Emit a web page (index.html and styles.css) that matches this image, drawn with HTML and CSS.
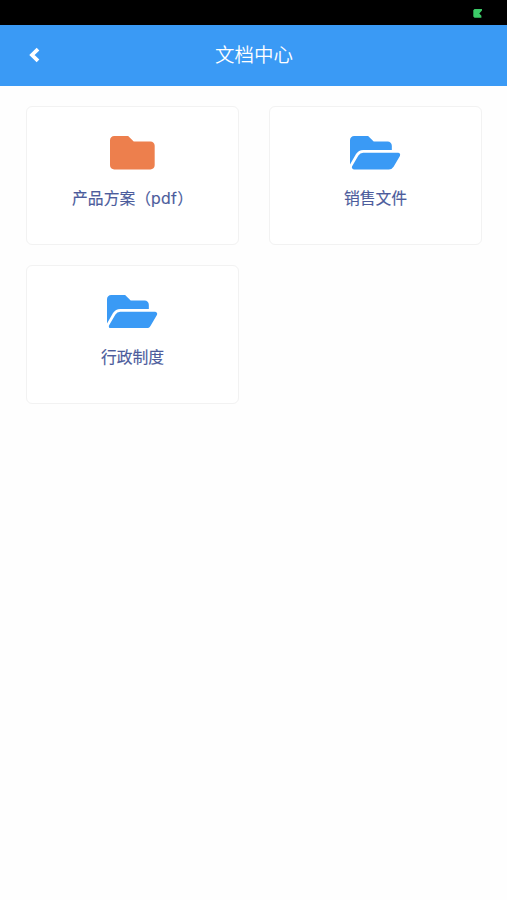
FILE: index.html
```html
<!DOCTYPE html>
<html lang="zh-CN">
<head>
<meta charset="utf-8">
<title>文档中心</title>
<link rel="stylesheet" href="styles.css">
</head>
<body>
<div class="status-bar">
  <svg class="status-icon" viewBox="0 0 10 9"><path d="M1.5 0H9V1.6L6.3 4.6 8.4 6.8V8.7H1.5L.3 7.5V1.2Z"/></svg>
</div>
<header class="nav-bar">
  <svg class="back" viewBox="0 0 12 16"><path d="M10 2.2 4 8l6 5.8"/></svg>
  <h1 class="title">文档中心</h1>
</header>
<main class="grid">
  <a class="card">
    <svg class="folder folder-closed" viewBox="0 64 512 384"><path d="M464 128H272l-64-64H48C21.49 64 0 85.49 0 112v288c0 26.51 21.49 48 48 48h416c26.51 0 48-21.49 48-48V176c0-26.51-21.49-48-48-48z"/></svg>
    <span class="label">产品方案（<span class="latin">pdf</span>）</span>
  </a>
  <a class="card">
    <svg class="folder folder-open" viewBox="0 64 576 384"><path d="M572.694 292.093L500.27 416.248A63.997 63.997 0 0 1 444.989 448H45.025c-18.523 0-30.064-20.093-20.731-36.093l72.424-124.155A64 64 0 0 1 152 256h399.964c18.523 0 30.064 20.093 20.73 36.093zM152 224h328v-48c0-26.51-21.49-48-48-48H272l-64-64H48C21.49 64 0 85.49 0 112v278.046l69.077-118.418C86.214 242.25 117.989 224 152 224z"/></svg>
    <span class="label">销售文件</span>
  </a>
  <a class="card">
    <svg class="folder folder-open" viewBox="0 64 576 384"><path d="M572.694 292.093L500.27 416.248A63.997 63.997 0 0 1 444.989 448H45.025c-18.523 0-30.064-20.093-20.731-36.093l72.424-124.155A64 64 0 0 1 152 256h399.964c18.523 0 30.064 20.093 20.73 36.093zM152 224h328v-48c0-26.51-21.49-48-48-48H272l-64-64H48C21.49 64 0 85.49 0 112v278.046l69.077-118.418C86.214 242.25 117.989 224 152 224z"/></svg>
    <span class="label">行政制度</span>
  </a>
</main>
</body>
</html>
```
FILE: styles.css
```css
* {
  box-sizing: border-box;
}

body {
  margin: 0;
  min-height: 900px;
  background: #fefefe;
  font-family: Inter, "Noto Sans CJK SC", sans-serif;
}

.status-bar {
  display: flex;
  justify-content: flex-end;
  height: 25px;
  padding: 9px 24px 0 0;
  background: #000;
}

.status-icon {
  width: 10px;
  height: 9px;
  fill: #3ccb68;
}

.nav-bar {
  display: grid;
  grid-template-columns: 58px 1fr 57px;
  align-items: center;
  height: 61px;
  padding-bottom: 2px;
  background: #3a9af5;
}

.back {
  width: 12px;
  height: 16px;
  margin-left: 28px;
  fill: none;
  stroke: #fff;
  stroke-width: 3.8;
}

.title {
  margin: 0;
  color: #fff;
  font-size: 19.5px;
  font-weight: 350;
  line-height: 28px;
  text-align: center;
}

.grid {
  display: grid;
  grid-template-columns: 213px 213px;
  grid-auto-rows: 139px;
  gap: 19.5px 30px;
  padding: 20.4px 0 0 26px;
}

.card {
  display: flex;
  flex-direction: column;
  align-items: center;
  padding-top: 29px;
  border: 1px solid #f2f2f2;
  border-radius: 6px;
  background: #fff;
}

.folder {
  height: 33.5px;
}

.folder-closed {
  width: 44.7px;
  fill: #ed7f4d;
}

.folder-open {
  width: 50.2px;
  fill: #3a9af5;
}

.label {
  margin-top: 17.4px;
  color: #4c5c9c;
  font-size: 15.8px;
  font-weight: 400;
  line-height: 24px;
  white-space: nowrap;
  -webkit-text-stroke: 0.15px #4c5c9c;
}

.latin {
  letter-spacing: 0.3px;
}
```
